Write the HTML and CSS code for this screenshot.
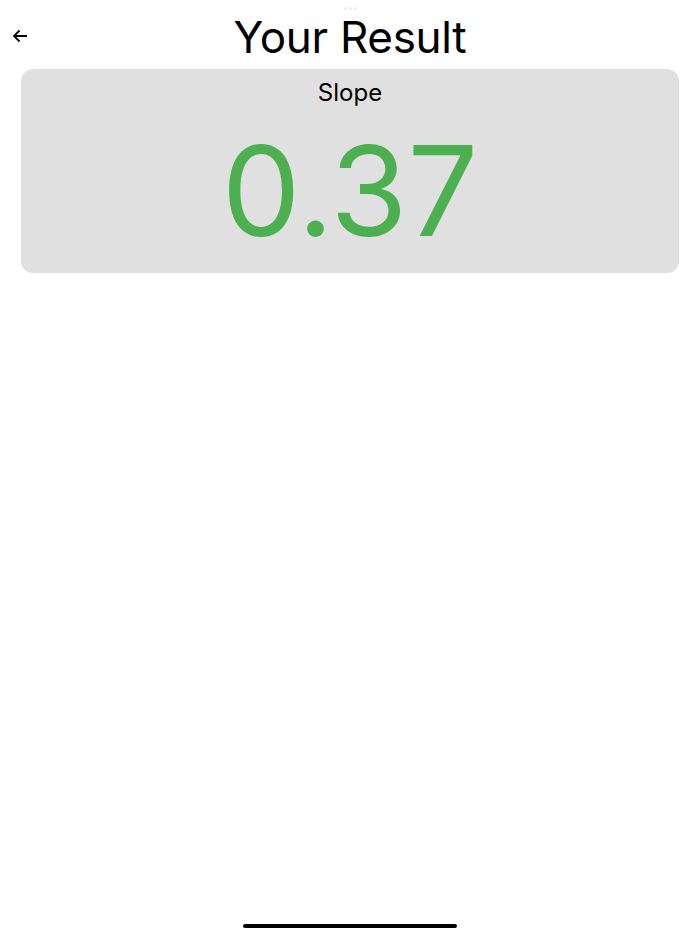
FILE: index.html
```html
<!DOCTYPE html>
<html lang="en">
<head>
  <meta charset="UTF-8">
  <meta name="viewport" content="width=device-width, initial-scale=1.0">
  <title>Your Result</title>
  <link rel="stylesheet" href="styles.css">
</head>
<body>
  <div class="pantalla">
    <div class="puntos"><span></span><span></span><span></span></div>
    <header class="cabecera">
      <button class="volver" aria-label="Back">
        <svg width="16" height="14" viewBox="0 0 16 14"><path d="M15 7H2M7.5 1.5 2 7l5.5 5.5" fill="none" stroke="#000" stroke-width="1.8"/></svg>
      </button>
      <h1>Your Result</h1>
    </header>

    <div class="resultado">
      <div class="etiqueta">Slope</div>
      <div class="valor">0.37</div>
    </div>

    <div class="inicio"></div>
  </div>
</body>
</html>
```

FILE: styles.css
```css
body {
  margin: 0;
  font-family: Inter, "Noto Sans", sans-serif;
  background: #fff;
  color: #000;
}
.pantalla {
  height: 934px;
  display: flex;
  flex-direction: column;
  position: relative;
}
.puntos { display: flex; justify-content: center; gap: 2px; padding-top: 7px; height: 3px; }
.puntos span { width: 3px; height: 3px; border-radius: 50%; background: #ececec; }
.cabecera {
  position: relative;
  height: 59px;
  display: flex;
  justify-content: center;
}
.cabecera h1 {
  margin: 0;
  font-size: 44px;
  line-height: 54px;
  font-weight: 400;
  letter-spacing: -0.3px;
}
.volver {
  position: absolute;
  left: 12px;
  top: 19px;
  padding: 0;
  border: none;
  background: none;
  cursor: pointer;
}
.resultado {
  margin: 0 21px;
  background: #e0e0e0;
  border-radius: 12px;
  height: 204px;
  text-align: center;
}
.etiqueta { font-size: 24px; padding-top: 9px; line-height: 30px; }
.valor { font-size: 125px; line-height: 165px; color: #4caf50; font-weight: 400; }
.inicio {
  position: absolute;
  left: 243px;
  bottom: 6px;
  width: 214px;
  height: 4px;
  border-radius: 2px;
  background: #000;
}
```
